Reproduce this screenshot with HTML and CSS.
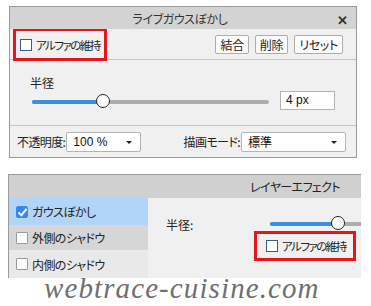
FILE: index.html
```html
<!DOCTYPE html>
<html lang="ja">
<head>
  <meta charset="UTF-8">
  <title>ライブガウスぼかし</title>
  <link rel="stylesheet" href="styles.css">
</head>
<body>

  <!-- ライブフィルタのパネル -->
  <div class="panel">
    <div class="titlebar">
      <span>ライブガウスぼかし</span>
      <span class="close">✕</span>
    </div>

    <div class="row-top">
      <label class="check marked">
        <span class="box"></span><span class="small">アルファの維持</span>
      </label>
      <div class="buttons">
        <button class="btn">結合</button>
        <button class="btn">削除</button>
        <button class="btn">リセット</button>
      </div>
    </div>

    <div class="row-radius">
      <div class="caption">半径</div>
      <div class="slider-line">
        <div class="slider">
          <div class="fill" style="width: 30%"></div>
          <div class="thumb" style="left: 30%"></div>
        </div>
        <div class="field">4 px</div>
      </div>
    </div>

    <div class="row-bottom">
      <div class="pair">
        <span class="tight">不透明度:</span>
        <div class="select sel-opacity">100 %<i class="arrow"></i></div>
      </div>
      <div class="pair">
        <span class="tight">描画モード:</span>
        <div class="select sel-mode">標準<i class="arrow"></i></div>
      </div>
    </div>
  </div>

  <!-- レイヤーエフェクトのパネル -->
  <div class="panel2">
    <div class="header"><span class="tight">レイヤーエフェクト</span></div>
    <div class="fx-body">
      <div class="fx-list">
        <div class="fx-item active"><span class="box checked"></span><span class="tight">ガウスぼかし</span></div>
        <div class="fx-item dark"><span class="box"></span><span class="tight">外側のシャドウ</span></div>
        <div class="fx-item"><span class="box"></span><span class="tight">内側のシャドウ</span></div>
      </div>
      <div class="fx-content">
        <div class="fx-radius">
          <span class="label">半径:</span>
          <div class="slider wide">
            <div class="fill" style="width: 68px"></div>
            <div class="thumb" style="left: 68px"></div>
          </div>
        </div>
        <label class="check marked fx-alpha">
          <span class="box"></span><span class="small">アルファの維持</span>
        </label>
      </div>
    </div>
  </div>

  <div class="watermark">webtrace-cuisine.com</div>

</body>
</html>
```

FILE: styles.css
```css
* {
  box-sizing: border-box;
  margin: 0;
  padding: 0;
}

body {
  font-family: "Noto Sans CJK JP", "Noto Sans", sans-serif;
  font-size: 12px;
  font-feature-settings: "palt";
  color: #222;
  background: #fff;
  padding-top: 6px;
  overflow: hidden;
  white-space: nowrap;
}

.tight {
  letter-spacing: -0.6px;
}

.small {
  font-size: 11.5px;
  letter-spacing: -1.5px;
}

/* パネル上 */
.panel {
  margin-left: 9px;
  width: 348px;
  border: 1px solid #9a9a9a;
  background: #f0f0f0;
}

.titlebar {
  height: 22px;
  background: #d3d3d3;
  display: flex;
  align-items: center;
  justify-content: center;
  position: relative;
  color: #333;
  padding-right: 6px;
  letter-spacing: -0.4px;
}

.close {
  position: absolute;
  right: 8px;
  top: 3px;
  font-size: 13px;
  font-weight: bold;
  color: #333;
}

.row-top {
  height: 31px;
  border-bottom: 1px solid #c6c6c6;
  display: flex;
  align-items: center;
  justify-content: space-between;
  padding: 0 13px 0 6px;
}

.check {
  display: flex;
  align-items: center;
  height: 27px;
  padding-left: 4px;
}

.check.marked {
  width: 88px;
  outline: 3px solid #e8141b;
}

.row-top .check {
  margin-top: 1px;
}

.box {
  display: inline-block;
  width: 12px;
  height: 12px;
  border: 1px solid #3d5a85;
  background: #fff;
  margin-right: 4px;
  position: relative;
  flex: none;
}

.buttons {
  display: flex;
  gap: 6px;
  margin-top: 1px;
}

.btn {
  font: inherit;
  font-feature-settings: "palt";
  height: 19px;
  padding: 0 4px;
  background: #fcfcfc;
  border: 1px solid #adadad;
  border-radius: 2px;
  color: #222;
  letter-spacing: -0.3px;
}

.row-radius {
  height: 66px;
  border-bottom: 1px solid #c6c6c6;
  padding: 15px 21px 0 22px;
}

.caption {
  height: 15px;
  line-height: 15px;
  margin-left: -2px;
}

.slider-line {
  display: flex;
  align-items: center;
  gap: 11px;
  height: 20px;
}

.slider {
  flex: 1;
  height: 4px;
  border-radius: 2px;
  background: #adadad;
  position: relative;
  margin-top: 4px;
}

.fill {
  position: absolute;
  left: 0;
  top: 0;
  bottom: 0;
  background: #3e8de0;
  border-radius: 2px;
}

.thumb {
  position: absolute;
  top: -6px;
  width: 14px;
  height: 14px;
  margin-left: -7px;
  border-radius: 50%;
  background: #fff;
  border: 1px solid #222;
}

.field {
  width: 55px;
  height: 19px;
  background: #fff;
  border: 1px solid #b4b4b4;
  font-family: "Liberation Sans", Arial, sans-serif;
  font-size: 12px;
  line-height: 17px;
  padding-left: 5px;
  color: #111;
}

.row-bottom {
  height: 31px;
  display: flex;
  align-items: center;
  justify-content: space-between;
  padding: 0 10px 0 7px;
}

.pair {
  display: flex;
  align-items: center;
}

.select {
  height: 20px;
  background: #fff;
  border: 1px solid #b4b4b4;
  border-radius: 2px;
  position: relative;
  line-height: 18px;
  padding-left: 6px;
  color: #111;
  margin-left: 1px;
}

.sel-opacity {
  width: 75px;
  font-family: "Liberation Sans", Arial, sans-serif;
}

.sel-mode {
  width: 105px;
}

.arrow {
  position: absolute;
  right: 8px;
  top: 8px;
  border-left: 3px solid transparent;
  border-right: 3px solid transparent;
  border-top: 3px solid #222;
}

/* パネル下 */
.panel2 {
  margin: 16px 0 0 8px;
  width: 353px;
  border-top: 1px solid #9a9a9a;
  border-left: 1px solid #9a9a9a;
}

.header {
  height: 23px;
  background: #d0d0d0;
  text-align: right;
  padding-right: 21px;
  line-height: 23px;
  color: #222;
}

.fx-body {
  display: flex;
  height: 80px;
}

.fx-list {
  width: 139px;
  background: #e9e9e9;
}

.fx-item {
  display: flex;
  align-items: center;
  height: 25px;
  padding-left: 7px;
}

.fx-item .box {
  border-color: #999;
  border-radius: 1px;
}

.fx-item.active {
  height: 27px;
  background: #b1d5f8;
}

.fx-item.dark {
  background: #d6d6d6;
}

.fx-item:last-child {
  height: 28px;
}

.box.checked {
  background: #3a86ea;
  border-color: #3a86ea;
  border-radius: 2px;
}

.box.checked::after {
  content: "";
  position: absolute;
  left: 3px;
  top: 0;
  width: 3px;
  height: 7px;
  border: solid #fff;
  border-width: 0 2px 2px 0;
  transform: rotate(40deg);
}

.fx-content {
  flex: 1;
  background: #f0f0f0;
  padding: 18px 0 0 18px;
  overflow: hidden;
}

.fx-radius {
  display: flex;
  align-items: center;
  height: 16px;
}

.label {
  flex: none;
}

.slider.wide {
  flex: none;
  width: 120px;
  margin: 0 0 0 77px;
}

.check.fx-alpha {
  margin: 2px 0 0 91px;
  width: 96px;
  height: 24px;
  padding-left: 9px;
}

.watermark {
  margin: -4px 0 0 44px;
  font-family: "Liberation Serif", serif;
  font-style: italic;
  font-size: 29px;
  line-height: 28px;
  letter-spacing: 1.1px;
  color: #6f6f6f;
  text-shadow: 0 0 2px #fff, 0 0 2px #fff;
  position: relative;
}
```
